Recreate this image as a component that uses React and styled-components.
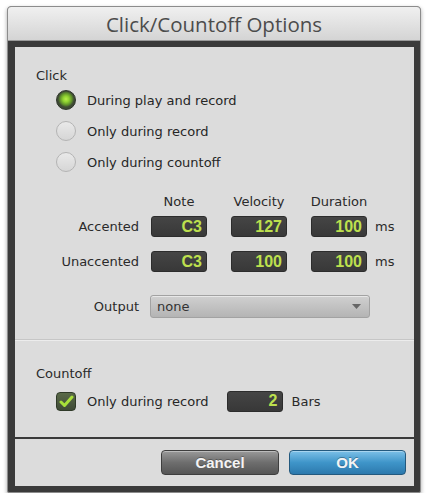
import React, { useState } from "react";
import styled, { createGlobalStyle } from "styled-components";

const GlobalStyle = createGlobalStyle`
  body {
    margin: 0;
    background: #ffffff;
    font-family: "DejaVu Sans", Verdana, sans-serif;
  }
`;

const Window = styled.div`
  margin: 6px 0 0 7px;
  width: 414px;
  background: #3a3a3a;
  border: 1px solid #8c8c8c;
  border-radius: 4px 4px 2px 2px;
  box-shadow: 0 2px 4px rgba(0, 0, 0, 0.35);
  overflow: hidden;
  box-sizing: border-box;
`;

const TitleBar = styled.div`
  height: 33px;
  display: flex;
  align-items: center;
  justify-content: center;
  background: linear-gradient(#f0f0f0, #d4d4d4);
  border-bottom: 1px solid #9a9a9a;
  font-family: "Open Sans", "DejaVu Sans", sans-serif;
  font-size: 20.5px;
  color: #4c4c4c;
`;

const Body = styled.div`
  padding: 6px 6px 6px 7px;
  display: flex;
  flex-direction: column;
  gap: 2px;
`;

const Panel = styled.div`
  background: #dcdcdc;
  height: ${(p) => p.h}px;
  box-sizing: border-box;
`;

const Section = styled.div`
  padding: ${(p) => p.pad};
  display: flex;
  flex-direction: column;
`;

const Heading = styled.div`
  font-size: 13px;
  color: #2a2a2a;
  padding-left: 21px;
  height: 18px;
  line-height: 18px;
`;

const RadioList = styled.div`
  display: flex;
  flex-direction: column;
  gap: 11px;
  padding-left: 41px;
  margin-top: 5px;
`;

const Option = styled.label`
  display: flex;
  align-items: center;
  gap: 11px;
  font-size: 13px;
  color: #262626;
  height: 20px;
  cursor: default;
  padding-left: ${(p) => p.indent || 0}px;
`;

const RadioDot = styled.span`
  width: 20px;
  height: 20px;
  border-radius: 50%;
  box-sizing: border-box;
  flex: none;
  ${(p) =>
    p.on
      ? `background: radial-gradient(circle at 50% 45%, #b8ee4a 0, #8fd230 3px, #5e8e2c 6px, #3e4a34 8px);
         border: 1px solid #2e352a;`
      : `background: linear-gradient(#e9e9e9, #d6d6d6);
         border: 1px solid #b4b4b4;`}
`;

const Row = styled.div`
  display: flex;
  align-items: center;
  height: ${(p) => p.h || 21}px;
  margin-top: ${(p) => p.mt || 0}px;
`;

const RowLabel = styled.div`
  width: ${(p) => p.w || 124}px;
  margin-right: ${(p) => p.gap || 12}px;
  text-align: right;
  font-size: 13px;
  color: #2a2a2a;
  flex: none;
`;

const ColHead = styled.div`
  width: 56px;
  margin-right: 24px;
  display: flex;
  justify-content: center;
  white-space: nowrap;
  font-size: 13px;
  color: #2a2a2a;
`;

const Field = styled.div`
  width: 56px;
  height: 21px;
  margin-right: ${(p) => p.mr ?? 24}px;
  margin-left: ${(p) => p.ml || 0}px;
  box-sizing: border-box;
  background: linear-gradient(#454545, #383838);
  border: 1px solid #2c2c2c;
  border-radius: 3px;
  display: flex;
  align-items: center;
  justify-content: flex-end;
  padding-right: 4px;
  font-family: "Liberation Sans", Arial, sans-serif;
  font-weight: bold;
  font-size: 16px;
  color: #bde04e;
  flex: none;
`;

const Unit = styled.span`
  font-size: 13px;
  color: #2a2a2a;
`;

const Select = styled.div`
  width: 220px;
  height: 23px;
  box-sizing: border-box;
  border: 1px solid #a2a2a2;
  border-radius: 3px;
  background: linear-gradient(#d0d0d0, #b4b4b4);
  box-shadow: inset 0 1px 0 rgba(255, 255, 255, 0.5);
  display: flex;
  align-items: center;
  justify-content: space-between;
  padding: 0 8px 0 6px;
  font-size: 13px;
  color: #333;
`;

const Divider = styled.div`
  height: 1px;
  background: #c6c6c6;
  border-bottom: 1px solid #ececec;
  margin-top: ${(p) => p.mt}px;
`;

const CheckBox = styled.span`
  width: 20px;
  height: 19px;
  border-radius: 4px;
  box-sizing: border-box;
  border: 1px solid #2f3a28;
  background: linear-gradient(#5a6a48, #3f4a36);
  display: flex;
  align-items: center;
  justify-content: center;
  flex: none;
`;

const ButtonBar = styled.div`
  height: 100%;
  display: flex;
  align-items: center;
  justify-content: flex-end;
  gap: 10px;
  padding-right: 8px;
`;

const Button = styled.button`
  width: ${(p) => p.w}px;
  height: 25px;
  border-radius: 4px;
  border: 1px solid ${(p) => (p.primary ? "#23597e" : "#3e3e3e")};
  background: ${(p) =>
    p.primary
      ? "linear-gradient(#7cc0e8, #3f95c9 50%, #2c79ad)"
      : "linear-gradient(#9a9a9a, #6e6e6e 50%, #555)"};
  box-shadow: inset 0 1px 0 rgba(255, 255, 255, 0.35);
  color: #f4f4f4;
  font-family: "Liberation Sans", Arial, sans-serif;
  font-weight: bold;
  font-size: 15px;
  text-shadow: 0 -1px 0 rgba(0, 0, 0, 0.3);
  cursor: pointer;
`;

const radioOptions = [
  "During play and record",
  "Only during record",
  "Only during countoff",
];

const rows = [
  { label: "Accented", note: "C3", vel: "127", dur: "100" },
  { label: "Unaccented", note: "C3", vel: "100", dur: "100" },
];

const App = () => {
  const [mode, setMode] = useState(0);

  return (
    <>
      <GlobalStyle />
      <Window>
        <TitleBar>Click/Countoff Options</TitleBar>
        <Body>
          <Panel h={390}>
            <Section pad="20px 0 0 0">
              <Heading>Click</Heading>
              <RadioList>
                {radioOptions.map((opt, i) => (
                  <Option key={opt} onClick={() => setMode(i)}>
                    <RadioDot on={mode === i} />
                    {opt}
                  </Option>
                ))}
              </RadioList>

              <Row h={20} mt={19}>
                <RowLabel />
                <ColHead>Note</ColHead>
                <ColHead>Velocity</ColHead>
                <ColHead>Duration</ColHead>
              </Row>

              {rows.map((r, i) => (
                <Row key={r.label} mt={i === 0 ? 5 : 14}>
                  <RowLabel>{r.label}</RowLabel>
                  <Field>{r.note}</Field>
                  <Field>{r.vel}</Field>
                  <Field mr={8}>{r.dur}</Field>
                  <Unit>ms</Unit>
                </Row>
              ))}

              <Row h={23} mt={23}>
                <RowLabel gap={11}>Output</RowLabel>
                <Select>
                  none
                  <svg width="9" height="6" viewBox="0 0 9 6">
                    <path d="M0 0 L9 0 L4.5 5 Z" fill="#666" />
                  </svg>
                </Select>
              </Row>
            </Section>

            <Divider mt={21} />

            <Section pad="24px 0 0 0">
              <Heading>Countoff</Heading>
              <Row h={22} mt={7}>
                <Option as="div" indent={41}>
                  <CheckBox>
                    <svg width="15" height="13" viewBox="0 0 15 13">
                      <path
                        d="M2 7 L5.5 10.5 L13 2"
                        fill="none"
                        stroke="#a8e03a"
                        strokeWidth="3"
                        strokeLinecap="round"
                        strokeLinejoin="round"
                      />
                    </svg>
                  </CheckBox>
                  Only during record
                </Option>
                <Field mr={9} ml={18}>
                  2
                </Field>
                <Unit>Bars</Unit>
              </Row>
            </Section>
          </Panel>
          <Panel h={47}>
            <ButtonBar>
              <Button w={118}>Cancel</Button>
              <Button w={117} primary>
                OK
              </Button>
            </ButtonBar>
          </Panel>
        </Body>
      </Window>
    </>
  );
};

export default App;
